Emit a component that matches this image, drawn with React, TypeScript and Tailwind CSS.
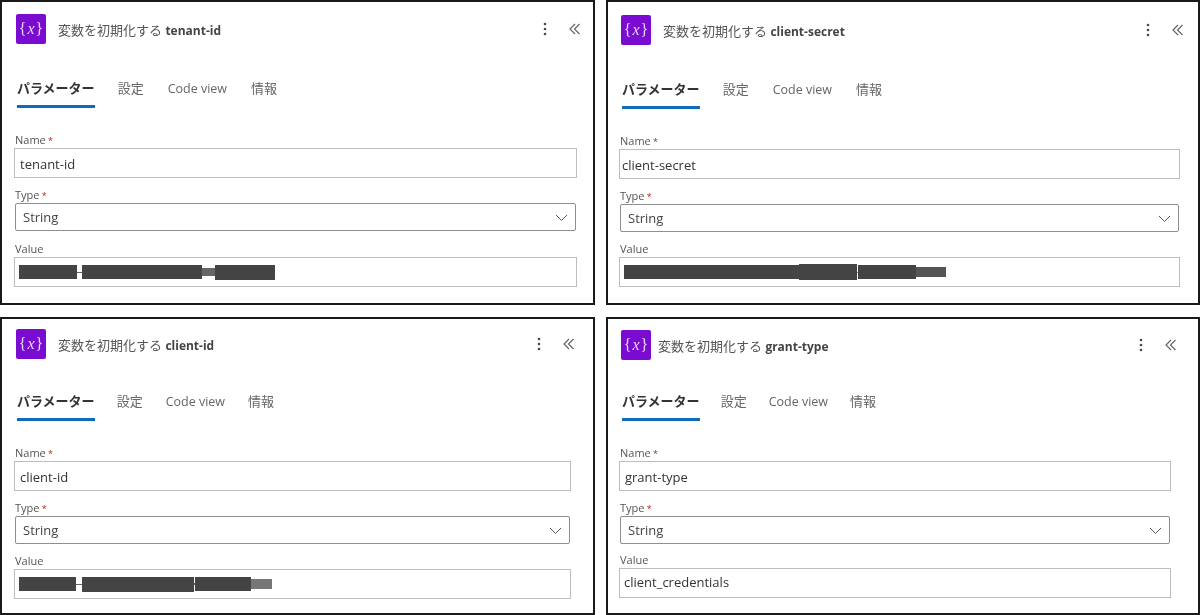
const FONT = "font-['Open_Sans','Noto_Sans_CJK_JP',sans-serif]";

interface CardProps {
  name: string;
  value?: string;
  blobs?: string[];
  column: string;
  top: string;
  tabsGap: string;
  tabsSpacing?: string;
  valueGap: string;
  nameInset?: string;
  headerInset?: string;
  titleGap?: string;
}

function VariableIcon() {
  return (
    <div className="flex h-[30px] w-[30px] shrink-0 items-center justify-center rounded-[2px] bg-[#7a0bd0] font-['Liberation_Serif',serif] text-[16px] text-[#e6d5f5]">
      <span>&#123;</span>
      <span className="mx-[1px] italic">x</span>
      <span>&#125;</span>
    </div>
  );
}

function Kebab() {
  return (
    <svg width="4" height="14" viewBox="0 0 4 14" fill="#4a4a4a">
      <circle cx="2" cy="2" r="1.3" />
      <circle cx="2" cy="7" r="1.3" />
      <circle cx="2" cy="12" r="1.3" />
    </svg>
  );
}

function CollapseIcon() {
  return (
    <svg width="12" height="12" viewBox="0 0 12 12" fill="none" stroke="#666" strokeWidth="1.2">
      <path d="M6 1 L1 6 L6 11" />
      <path d="M10.5 1 L5.5 6 L10.5 11" />
    </svg>
  );
}

function Label({ text, required }: { text: string; required?: boolean }) {
  return (
    <div className="h-[16px] pl-[1px] text-[11px] leading-[16px] text-[#555]">
      {text}
      {required && <span className="text-[9px] text-[#b3261e]"> *</span>}
    </div>
  );
}

function Card({
  name,
  value,
  blobs,
  column,
  top,
  tabsGap,
  valueGap,
  tabsSpacing = "gap-[24px]",
  nameInset = "pl-[5px]",
  headerInset = "-mr-[4px]",
  titleGap = "ml-[12px]",
}: CardProps) {
  return (
    <section className={`h-full border-2 border-[#1a1a1a] bg-white pl-[12px] ${top}`}>
      <div className={column}>
        <div className={`flex h-[30px] items-center pl-[2px] ${headerInset}`}>
          <VariableIcon />
          <div className={`pt-[3px] text-[13px] text-[#555] ${titleGap}`}>
            変数を初期化する <span className="text-[12px] font-bold text-[#444]">{name}</span>
          </div>
          <div className="ml-auto flex items-center gap-[22px]">
            <Kebab />
            <CollapseIcon />
          </div>
        </div>

        <div className={`flex h-[35px] items-start pl-[3px] text-[13px] leading-[31px] text-[#666] ${tabsGap} ${tabsSpacing}`}>
          <div className="h-[35px] border-b-[3px] border-[#0f6cbd] font-bold text-[#333]">パラメーター</div>
          <div className="-ml-[1px]">設定</div>
          <div className="text-[12.5px]">Code view</div>
          <div>情報</div>
        </div>

        <div className="mt-[24px]">
          <Label text="Name" required />
          <div className={`flex h-[30px] items-center border border-[#bdbdbd] pt-[3px] text-[13px] text-[#333] ${nameInset}`}>{name}</div>
        </div>

        <div className="mt-[9px]">
          <Label text="Type" required />
          <div className="mx-[1px] flex h-[28px] items-center justify-between rounded-[2px] border border-[#8f8f8f] pl-[7px] pr-[7px] pt-[2px] text-[13px] text-[#444]">
            String
            <svg width="13" height="8" viewBox="0 0 13 8" fill="none" stroke="#555" strokeWidth="1">
              <path d="M1 1 L6.5 6.5 L12 1" />
            </svg>
          </div>
        </div>

        <div className={valueGap}>
          <Label text="Value" />
          <div className="flex h-[30px] items-center border border-[#bdbdbd] px-[4px] text-[13px] text-[#333]">
            {value}
            {blobs && (
              <div className="flex h-[15px] items-center blur-[0.6px]">
                {blobs.map((w, i) => (
                  <div key={i} className={w} />
                ))}
              </div>
            )}
          </div>
        </div>
      </div>
    </section>
  );
}

export default function App() {
  return (
    <div className={`grid h-[615px] w-[1200px] grid-cols-[595px_594px] grid-rows-[305px_298px] gap-x-[11px] gap-y-[12px] overflow-hidden bg-white blur-[0.3px] ${FONT}`}>
      <Card
        name="tenant-id"
        column="w-[563px]"
        top="pt-[12px]"
        tabsGap="mt-[29px]"
        valueGap="mt-[10px]"
        blobs={[
          "h-[14px] w-[58px] bg-[#444]",
          "h-[1px] w-[5px] bg-[#666]",
          "h-[14px] w-[120px] bg-[#444]",
          "h-[8px] w-[13px] bg-[#666]",
          "h-[15px] w-[60px] bg-[#444]",
        ]}
      />
      <Card
        name="client-secret"
        column="w-[561px] -ml-[1px]"
        top="pt-[13px]"
        tabsGap="mt-[29px]"
        valueGap="mt-[9px]"
        nameInset="pl-[2px]"
        blobs={[
          "h-[14px] w-[60px] bg-[#444]",
          "h-[14px] w-[115px] bg-[#444]",
          "h-[16px] w-[58px] bg-[#444]",
          "h-[1px] w-[1px] bg-[#888]",
          "h-[14px] w-[58px] bg-[#444]",
          "h-[10px] w-[30px] bg-[#555]",
        ]}
      />
      <Card
        name="client-id"
        column="w-[557px]"
        top="pt-[10px]"
        tabsGap="mt-[27px]"
        tabsSpacing="gap-[23px]"
        valueGap="mt-[9px]"
        blobs={[
          "h-[14px] w-[57px] bg-[#444]",
          "h-[1px] w-[6px] bg-[#666]",
          "h-[15px] w-[112px] bg-[#444]",
          "h-[2px] w-[1px] bg-[#666]",
          "h-[14px] w-[56px] bg-[#444]",
          "h-[10px] w-[21px] bg-[#777]",
        ]}
      />
      <Card
        name="grant-type"
        value="client_credentials"
        column="w-[552px] -ml-[1px]"
        top="pt-[11px]"
        tabsGap="mt-[26px]"
        tabsSpacing="gap-[22px]"
        valueGap="mt-[8px]"
        headerInset="-mr-[6px]"
        titleGap="ml-[7px]"
      />
    </div>
  );
}
